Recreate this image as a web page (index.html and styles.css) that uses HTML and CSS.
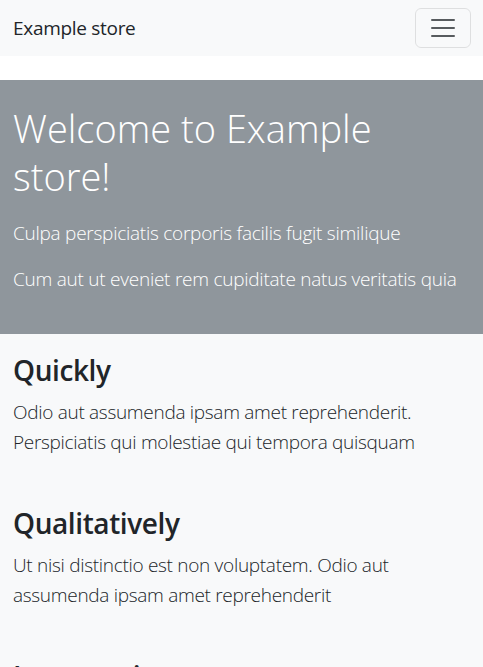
FILE: index.html
```html
<!DOCTYPE html>
<html lang="en">
<head>
<meta charset="utf-8">
<title>Example store</title>
<link rel="stylesheet" href="styles.css">
</head>
<body>
<nav class="navbar">
  <a class="brand" href="#">Example store</a>
  <button class="toggler" type="button" aria-label="Toggle navigation">
    <svg class="toggler-icon" viewBox="0 0 30 30" width="30" height="30" aria-hidden="true">
      <path d="M4 7h22M4 15h22M4 23h22" stroke="rgba(33,37,41,0.75)" stroke-width="2" stroke-linecap="round" fill="none"/>
    </svg>
  </button>
</nav>
<main>
  <header class="hero">
    <h1 class="hero-title">Welcome to Example store!</h1>
    <p class="lead">Culpa perspiciatis corporis facilis fugit similique</p>
    <p class="lead">Cum aut ut eveniet rem cupiditate natus veritatis quia</p>
  </header>
  <div class="content">
    <section class="feature">
      <h3 class="feature-title">Quickly</h3>
      <p class="feature-text">Odio aut assumenda ipsam amet reprehenderit. Perspiciatis qui molestiae qui tempora quisquam</p>
    </section>
    <section class="feature">
      <h3 class="feature-title">Qualitatively</h3>
      <p class="feature-text">Ut nisi distinctio est non voluptatem. Odio aut assumenda ipsam amet reprehenderit</p>
    </section>
    <section class="feature">
      <h3 class="feature-title">Inexpensive</h3>
      <p class="feature-text">Dolor sit amet consectetur adipisci velit sed quia non numquam</p>
    </section>
  </div>
</main>
</body>
</html>
```

FILE: styles.css
```css
* { box-sizing: border-box; }
html, body { margin: 0; padding: 0; }
body {
  font-family: "Open Sans", "Noto Sans", sans-serif;
  color: #212529;
  background: #ffffff;
  font-size: 16px;
}
.navbar {
  height: 56px;
  background: #f8f9fa;
  padding: 8px 12px;
  display: flex;
  align-items: center;
  justify-content: space-between;
}
.brand {
  font-size: 19px;
  color: #212529;
  text-decoration: none;
  line-height: 30px;
  letter-spacing: -0.3px;
  margin-left: 1px;
}
.toggler {
  width: 56px;
  height: 40px;
  padding: 4px 12px;
  border: 1px solid rgba(0,0,0,0.1);
  border-radius: 6px;
  background: transparent;
  display: flex;
  align-items: center;
  justify-content: center;
}
.toggler-icon { display: block; }
main { margin-top: 24px; }
.hero {
  background: #8f969c;
  color: #ffffff;
  padding: 24px 12px 24px 13px;
}
.hero-title {
  font-size: 38px;
  font-weight: 300;
  line-height: 48px;
  margin: 0 0 18px;
}
.lead {
  font-size: 19px;
  font-weight: 300;
  line-height: 30px;
  margin: 0 0 16px;
  letter-spacing: -0.25px;
}
.content {
  background: #f8f9fa;
  padding: 19px 12px 40px 13px;
  display: flex;
  flex-direction: column;
  gap: 49px;
}
.feature-title {
  font-size: 28px;
  font-weight: 600;
  line-height: 34px;
  margin: 0 0 10px;
  letter-spacing: -0.4px;
}
.feature-text {
  font-size: 19px;
  font-weight: 300;
  line-height: 30px;
  margin: 0;
  letter-spacing: -0.3px;
}
```
